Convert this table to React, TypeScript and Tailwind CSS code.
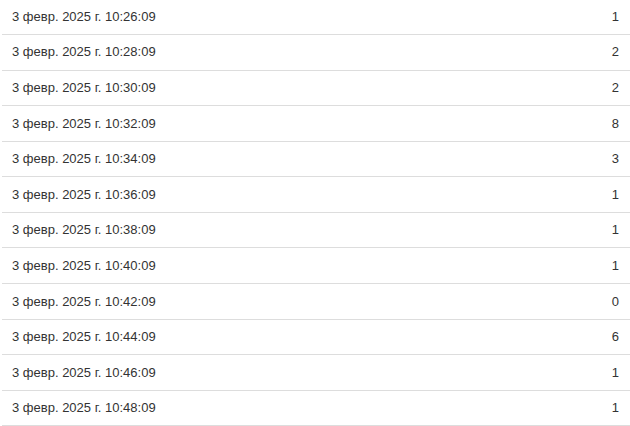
const rows: [string, number][] = [
  ["3 февр. 2025 г. 10:26:09", 1],
  ["3 февр. 2025 г. 10:28:09", 2],
  ["3 февр. 2025 г. 10:30:09", 2],
  ["3 февр. 2025 г. 10:32:09", 8],
  ["3 февр. 2025 г. 10:34:09", 3],
  ["3 февр. 2025 г. 10:36:09", 1],
  ["3 февр. 2025 г. 10:38:09", 1],
  ["3 февр. 2025 г. 10:40:09", 1],
  ["3 февр. 2025 г. 10:42:09", 0],
  ["3 февр. 2025 г. 10:44:09", 6],
  ["3 февр. 2025 г. 10:46:09", 1],
  ["3 февр. 2025 г. 10:48:09", 1],
];

export default function App() {
  return (
    <div className="w-[630px] h-[426px] overflow-hidden bg-white font-['Liberation_Sans',Arial,sans-serif] text-[13px] text-[#333]">
      <div className="ml-[2px] -mt-[0.7px]">
        {rows.map(([time, count], i) => (
          <div
            key={i}
            className="flex items-center justify-between h-[35.6px] border-b border-[#dddddd] pl-[10px] pr-[11px]"
          >
            <span>{time}</span>
            <span>{count}</span>
          </div>
        ))}
      </div>
    </div>
  );
}
